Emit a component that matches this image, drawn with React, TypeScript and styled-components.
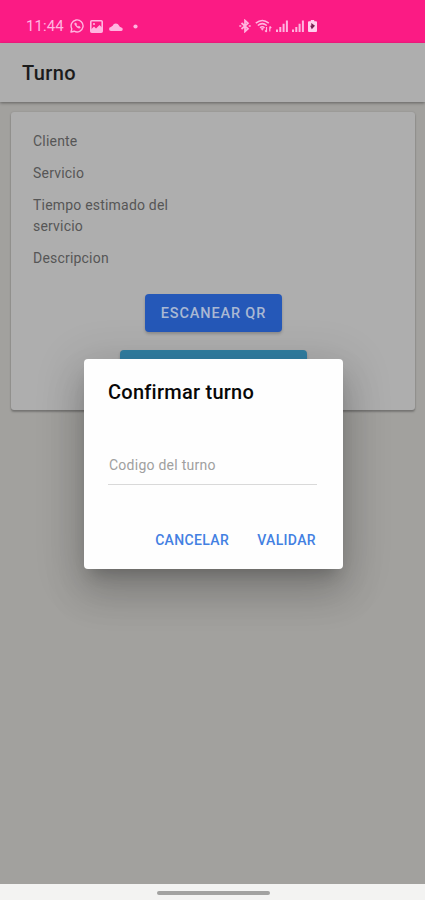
import React from "react";
import styled, { createGlobalStyle } from "styled-components";

const GlobalStyle = createGlobalStyle`
  * { box-sizing: border-box; }
  body { margin: 0; font-family: Roboto, "Liberation Sans", sans-serif; }
  button, input { font-family: inherit; }
`;

const Screen = styled.div`
  width: 425px;
  height: 900px;
  display: flex;
  flex-direction: column;
  overflow: hidden;
  background: #a2a19e;
`;

const StatusBar = styled.div`
  height: 43px;
  flex: none;
  display: flex;
  justify-content: space-between;
  align-items: center;
  padding: 9px 108px 0 26px;
  background: #fb1b84;
  color: #ffb5e0;
`;

const StatusGroup = styled.div<{ $gap: number }>`
  display: flex;
  align-items: center;
  gap: ${(p) => p.$gap}px;
  svg { display: block; }
`;

const Clock = styled.span`
  width: 38px;
  font-size: 15px;
  line-height: 16px;
  letter-spacing: 0.1px;
  white-space: nowrap;
`;

const Page = styled.div`
  flex: 1;
  position: relative;
  display: flex;
  flex-direction: column;
`;

const Header = styled.header`
  height: 59px;
  flex: none;
  display: flex;
  align-items: center;
  padding: 0 22px;
  background: #aeaeae;
  box-shadow: 0 1px 3px rgba(0, 0, 0, 0.4);
`;

const Title = styled.h1`
  margin: 0;
  font-size: 20px;
  font-weight: 500;
  letter-spacing: 0.4px;
  color: #1c1c1c;
`;

const Card = styled.section`
  margin: 10px 10px 0 11px;
  height: 298px;
  padding: 19px 22px;
  display: flex;
  flex-direction: column;
  background: #aeaeae;
  border-radius: 3px;
  box-shadow: 0 2px 2px rgba(0, 0, 0, 0.25), 0 0 2px rgba(0, 0, 0, 0.14);
`;

const Label = styled.p`
  width: 160px;
  margin: 0 0 10px;
  font-size: 14px;
  line-height: 21.8px;
  letter-spacing: 0.2px;
  color: #565656;
`;

const CardButton = styled.button<{ $color: string; $width: number }>`
  width: ${(p) => p.$width}px;
  height: 38px;
  flex: none;
  align-self: center;
  margin: 14px 0 4px;
  padding: 1px 0 0 1px;
  border: 0;
  border-radius: 4px;
  background: ${(p) => p.$color};
  color: #aab8d3;
  font-size: 14.5px;
  font-weight: 500;
  letter-spacing: 0.85px;
  box-shadow: 0 2px 3px rgba(0, 0, 0, 0.2);
`;

const Overlay = styled.div`
  position: absolute;
  inset: 0;
  display: flex;
  align-items: center;
  justify-content: center;
`;

const Dialog = styled.div`
  width: 259px;
  height: 210px;
  margin-left: 2px;
  padding: 21px 26px 0 24px;
  display: flex;
  flex-direction: column;
  background: #fefefe;
  border-radius: 4px;
  box-shadow: 0 11px 15px -7px rgba(0, 0, 0, 0.2), 0 24px 38px 3px rgba(0, 0, 0, 0.14),
    0 9px 46px 8px rgba(0, 0, 0, 0.12);
`;

const DialogTitle = styled.h2`
  margin: 0;
  font-size: 20px;
  line-height: 24px;
  font-weight: 500;
  letter-spacing: 0.25px;
  color: #080808;
`;

const CodeInput = styled.input`
  width: 100%;
  height: 38px;
  margin-top: 43px;
  padding: 0 0 1px 1px;
  border: 0;
  border-bottom: 1px solid #d9d9d9;
  background: transparent;
  font-size: 14px;
  letter-spacing: 0.25px;
  outline: none;
  &::placeholder { color: #a0a0a0; opacity: 1; }
`;

const Actions = styled.div`
  margin-top: 44px;
  padding-right: 1px;
  display: flex;
  justify-content: flex-end;
  gap: 28px;
`;

const Action = styled.button`
  padding: 0;
  border: 0;
  background: none;
  color: #4380e2;
  font-size: 14px;
  line-height: 22px;
  font-weight: 500;
  letter-spacing: 0.35px;
`;

const NavBar = styled.div`
  height: 16px;
  flex: none;
  display: flex;
  justify-content: center;
  padding: 7px 0 0 1px;
  background: #f3f3f2;
`;

const NavHandle = styled.div`
  width: 113px;
  height: 4px;
  border-radius: 2px;
  background: #a2a2a1;
`;

const WhatsAppIcon = () => (
  <svg width="14" height="14" viewBox="0 0 14 14" fill="none" stroke="currentColor" strokeWidth="1.4">
    <path d="M1 13l.8-3.200A6 6 0 1 1 4.200 12.200z" strokeLinejoin="round" />
    <path d="M4.800 4.200c-.8 1.300 2.700 5.400 4.900 4.900l.6-1-1.500-.9-.8.6c-.8-.3-1.500-1-1.800-1.800l.5-.6-.7-1.400z" fill="currentColor" strokeWidth=".6" />
  </svg>
);

const PictureIcon = () => (
  <svg width="13" height="13" viewBox="0 0 13 13">
    <rect x=".8" y=".8" width="11.400" height="11.400" rx="1" fill="none" stroke="currentColor" strokeWidth="1.600" />
    <path d="M1 9.500l3-3 2 2 3.500-3.500L12 7.500V12H1z" fill="currentColor" />
    <circle cx="4" cy="4" r="1.100" fill="currentColor" />
  </svg>
);

const CloudIcon = () => (
  <svg width="14" height="9" viewBox="0 0 14 9" fill="currentColor">
    <path d="M2 9a2 2 0 0 1 .1-4 2.600 2.600 0 0 1 1.600-1.200A3.400 3.400 0 0 1 10 3.500q.4 1.500 2.300 1.900a1.850 1.850 0 0 1 0 3.600z" />
  </svg>
);

const DotIcon = () => (
  <svg width="13" height="5" viewBox="0 0 13 5" fill="currentColor">
    <circle cx="6.500" cy="2.500" r="2.100" />
  </svg>
);

const BluetoothIcon = () => (
  <svg width="12" height="14" viewBox="0 0 12 14" fill="none" stroke="currentColor" strokeWidth="1.700">
    <path d="M2.500 4l6.500 5.800L6 12.500v-11l3 2.700L2.500 10" />
    <path d="M.3 7h2M9.700 7h2" />
  </svg>
);

const WifiIcon = () => (
  <svg width="17" height="14" viewBox="0 0 17 14" fill="none" stroke="currentColor" strokeWidth="1.500">
    <path d="M.8 4.200Q7.300-1.200 13.800 4.200M2.800 6.500q4.500-3.700 9 0M5 8.700q2.300-2 4.600 0" />
    <path d="M7.300 11.500L5.800 9.600q1.500-1 3 0z" fill="currentColor" strokeWidth=".3" />
    <path d="M11.500 8v5M10 11.500l1.500 1.500M14.800 12.500v-5M16.300 9l-1.500-1.500" strokeWidth="1.200" />
  </svg>
);

const SignalIcon = () => (
  <svg width="12" height="12" viewBox="0 0 12 12" fill="currentColor">
    <path d="M0 9.500h2V12H0zM3.300 7h2v5h-2zM6.600 3.800h2V12h-2zM9.900.5h2V12h-2z" />
  </svg>
);

const BatteryIcon = () => (
  <svg width="9" height="12" viewBox="0 0 9 12">
    <path d="M2.800 0h3.400v1.300H8q1 0 1 1V11q0 1-1 1H1q-1 0-1-1V2.300q0-1 1-1h1.800z" fill="#ffd0ed" />
    <path d="M3.300 3v2.800H2.200l1.600 3.500 3.200-3.500z" fill="#75204f" />
  </svg>
);

const labels = ["Cliente", "Servicio", "Tiempo estimado del servicio", "Descripcion"];

export default function App() {
  return (
    <Screen>
      <GlobalStyle />
      <StatusBar>
        <StatusGroup $gap={6}>
          <Clock>11:44</Clock>
          <WhatsAppIcon />
          <PictureIcon />
          <CloudIcon />
          <DotIcon />
        </StatusGroup>
        <StatusGroup $gap={4}>
          <BluetoothIcon />
          <WifiIcon />
          <SignalIcon />
          <SignalIcon />
          <BatteryIcon />
        </StatusGroup>
      </StatusBar>
      <Page>
        <Header>
          <Title>Turno</Title>
        </Header>
        <Card>
          {labels.map((label) => (
            <Label key={label}>{label}</Label>
          ))}
          <CardButton $color="#2558b8" $width={137}>ESCANEAR QR</CardButton>
          <CardButton $color="#327fa3" $width={187} />
        </Card>
        <Overlay>
          <Dialog role="dialog" aria-labelledby="confirm-title">
            <DialogTitle id="confirm-title">Confirmar turno</DialogTitle>
            <CodeInput placeholder="Codigo del turno" />
            <Actions>
              <Action>CANCELAR</Action>
              <Action>VALIDAR</Action>
            </Actions>
          </Dialog>
        </Overlay>
      </Page>
      <NavBar>
        <NavHandle />
      </NavBar>
    </Screen>
  );
}
